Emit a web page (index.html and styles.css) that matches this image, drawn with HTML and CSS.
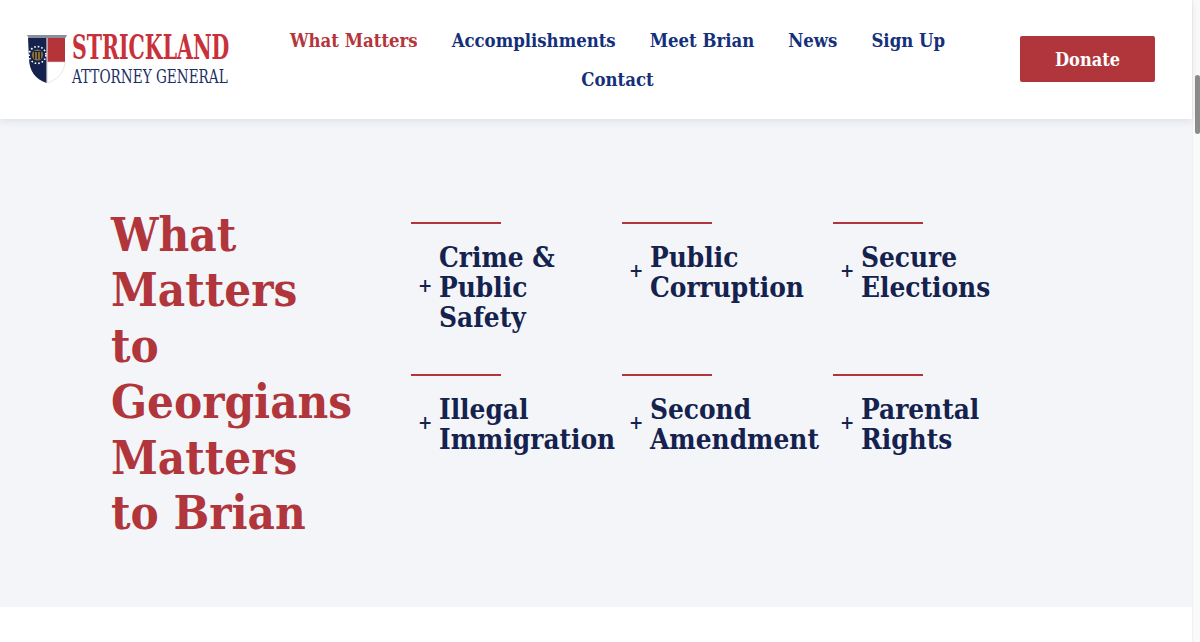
FILE: index.html
```html
<!DOCTYPE html>
<html lang="en">
<head>
<meta charset="utf-8">
<title>Strickland Attorney General</title>
<link rel="stylesheet" href="styles.css">
</head>
<body>
<div class="page">
  <header class="header">
    <a class="logo" href="#">
      <svg class="shield" viewBox="0 0 40 48" width="40" height="48" aria-hidden="true">
        <path d="M1 3H19.5V48C8 44 2.5 36 2 24Z" fill="#14224d"/>
        <path d="M20.5 3H38V27H20.5Z" fill="#b5343a"/>
        <path d="M20.5 27H38C37.5 37 31 44 20.5 48Z" fill="#fff" stroke="#d5d5d5" stroke-width=".6"/>
        <path d="M0 0H40L38.5 3H1.5Z" fill="#8a8f9e"/>
        <circle cx="10.5" cy="20" r="8.4" fill="none" stroke="#fff" stroke-width="1.6" stroke-dasharray="1.6 2"/>
        <circle cx="10.5" cy="20" r="5.6" fill="#8a6d2f"/>
        <path d="M7.5 24V17M10.5 24V16M13.5 24V17M6.5 16.5H14.5" stroke="#14224d" stroke-width="1" fill="none"/>
      </svg>
      <span class="logo-text">
        <span class="logo-name">STRICKLAND</span>
        <span class="logo-sub">ATTORNEY GENERAL</span>
      </span>
    </a>
    <nav class="nav">
      <a class="nav-link active" href="#">What Matters</a>
      <a class="nav-link" href="#">Accomplishments</a>
      <a class="nav-link" href="#">Meet Brian</a>
      <a class="nav-link" href="#">News</a>
      <a class="nav-link" href="#">Sign Up</a>
      <a class="nav-link" href="#">Contact</a>
    </nav>
    <a class="donate" href="#">Donate</a>
  </header>
  <section class="hero">
    <h1 class="title">What<br>Matters<br>to<br>Georgians<br>Matters<br>to Brian</h1>
    <div class="issues">
      <a class="issue" href="#"><span class="plus">+</span><span class="issue-name">Crime &amp; Public Safety</span></a>
      <a class="issue" href="#"><span class="plus">+</span><span class="issue-name">Public Corruption</span></a>
      <a class="issue" href="#"><span class="plus">+</span><span class="issue-name">Secure Elections</span></a>
      <a class="issue" href="#"><span class="plus">+</span><span class="issue-name">Illegal Immigration</span></a>
      <a class="issue" href="#"><span class="plus">+</span><span class="issue-name">Second Amendment</span></a>
      <a class="issue" href="#"><span class="plus">+</span><span class="issue-name">Parental Rights</span></a>
    </div>
  </section>
</div>
<div class="scrollbar"><div class="thumb"></div></div>
</body>
</html>
```
FILE: styles.css
```css
* { box-sizing: border-box; }
html, body { margin: 0; height: 642px; overflow: hidden; background: #fff; }
body { font-family: "DejaVu Serif", "Liberation Serif", serif; font-stretch: condensed; }
a { text-decoration: none; color: inherit; }
.page { width: 1192px; }
.header {
  position: relative;
  z-index: 1;
  height: 119px;
  padding: 0 37px 0 27px;
  display: flex;
  align-items: center;
  background: #fff;
  box-shadow: 0 2px 8px rgba(20, 30, 60, .1);
}
.logo { display: flex; align-items: center; gap: 5px; width: 202px; flex: none; margin-top: -1px; }
.shield { flex: none; }
.logo-text { display: flex; flex-direction: column; gap: 1px; width: 157px; }
.logo-name {
  display: block;
  font-size: 33px;
  line-height: 33px;
  font-weight: 700;
  color: #c8313a;
  white-space: nowrap;
  transform: scaleX(.689);
  transform-origin: left;
}
.logo-sub {
  display: block;
  font-size: 19px;
  line-height: 22px;
  color: #1c2f63;
  white-space: nowrap;
  transform: scaleX(.796);
  transform-origin: left;
}
.nav {
  flex: 1;
  display: flex;
  flex-wrap: wrap;
  justify-content: center;
  gap: 0 34px;
  padding: 0 44px 0 30px;
  margin-top: 1px;
}
.nav-link { font-size: 18.4px; line-height: 39px; font-weight: 700; color: #14307a; }
.nav-link.active { color: #b5353c; }
.donate {
  flex: none;
  width: 135px;
  height: 46px;
  margin-top: -2px;
  padding-top: 2px;
  display: flex;
  align-items: center;
  justify-content: center;
  background: #b1363c;
  border-radius: 2px;
  color: #fff;
  font-size: 18px;
  font-weight: 700;
}
.hero {
  height: 488px;
  padding: 103px 0 0 111px;
  display: flex;
  background: #f3f5f9;
}
.title {
  margin: -15.5px 0 0;
  width: 300px;
  flex: none;
  font-size: 47px;
  line-height: 55.8px;
  font-weight: 700;
  color: #b1363c;
}
.issues {
  display: grid;
  grid-template-columns: repeat(3, 211px);
  grid-auto-rows: 152px;
}
.issue {
  display: flex;
  align-items: center;
  align-self: start;
  position: relative;
  width: 211px;
  padding: 21px 0 0 7px;
  color: #14224d;
}
.issue::before {
  content: "";
  position: absolute;
  left: 0;
  top: 0;
  width: 90px;
  height: 2px;
  background: #b1363c;
}
.plus { width: 21px; flex: none; margin-top: -6px; font-size: 19px; font-weight: 700; }
.issue-name { font-size: 27.7px; line-height: 30px; font-weight: 700; max-width: 185px; }
.scrollbar {
  position: absolute;
  top: 0;
  right: 0;
  width: 8px;
  height: 642px;
  background: #fafafa;
  border-left: 1px solid #f0f0f0;
}
.thumb {
  position: absolute;
  top: 75px;
  left: 2px;
  width: 5px;
  height: 59px;
  border-radius: 3px;
  background: #8c8c8c;
}
```
